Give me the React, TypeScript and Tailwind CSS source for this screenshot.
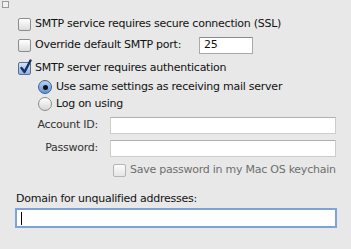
import React from 'react';

const Check: React.FC<{ checked?: boolean; disabled?: boolean }> = ({ checked, disabled }) => (
  <span
    className={`relative inline-block w-[13px] h-[13px] shrink-0 rounded-[2px] border ${
      disabled
        ? 'border-[#b4b4b4] bg-gradient-to-b from-[#fbfbfb] to-[#e6e6e6]'
        : checked
        ? 'border-[#5a6f94] bg-gradient-to-b from-[#d3e3f6] to-[#8fb3e0]'
        : 'border-[#8c8c8c] bg-gradient-to-b from-white to-[#dcdcdc]'
    }`}
  >
    {checked && (
      <svg className="absolute left-[0px] top-[-4px]" width="13" height="16" viewBox="0 0 13 16">
        <path d="M2.5 9 L5.5 13 L11.5 1.5" fill="none" stroke="#16306a" strokeWidth="2.4" strokeLinecap="round" strokeLinejoin="round" />
      </svg>
    )}
  </span>
);

const Radio: React.FC<{ on?: boolean }> = ({ on }) => (
  <span
    className={`flex items-center justify-center w-[14px] h-[14px] shrink-0 rounded-full border ${
      on
        ? 'border-[#3f5f8f] bg-gradient-to-b from-[#b9d3f1] to-[#5f93d6]'
        : 'border-[#8c8c8c] bg-gradient-to-b from-white to-[#d6d6d6]'
    }`}
  >
    {on && <span className="w-[5px] h-[5px] rounded-full bg-[#111]" />}
  </span>
);

export default function App() {
  return (
    <div
      className="w-[351px] h-[249px] bg-[#e8e8e8] overflow-hidden text-[11px] tracking-[-0.25px] text-[#111] flex flex-col"
      style={{ fontFamily: '"DejaVu Sans", "Liberation Sans", sans-serif' }}
    >
      <div className="h-[14px] pl-[2px] pt-[1px]">
        <span className="block w-[7px] h-[7px] border border-[#9a9a9a] bg-[#f0f0f0]" />
      </div>

      <div className="h-[20px] flex items-center pl-[18px] gap-[4px]">
        <Check />
        <span>SMTP service requires secure connection (SSL)</span>
      </div>

      <div className="h-[22px] flex items-center pl-[18px] gap-[4px]">
        <Check />
        <span className="w-[160px]">Override default SMTP port:</span>
        <div className="w-[54px] h-[17px] bg-white border border-[#a9a9a9] border-t-[#8a8a8a] flex items-center pl-[4px]">
          25
        </div>
      </div>

      <div className="h-[24px] flex items-center pl-[18px] gap-[4px]">
        <Check checked />
        <span>SMTP server requires authentication</span>
      </div>

      <div className="h-[14px] flex items-center pl-[38px] gap-[4px]">
        <Radio on />
        <span>Use same settings as receiving mail server</span>
      </div>

      <div className="h-[20px] flex items-center pl-[38px] gap-[4px]">
        <Radio />
        <span>Log on using</span>
      </div>

      <div className="mt-[3px] h-[17px] flex items-center">
        <span className="w-[98px] text-right text-[#333]">Account ID:</span>
        <div className="ml-[12px] w-[226px] h-[17px] bg-white border border-[#cdcdcd] border-t-[#b0b0b0]" />
      </div>

      <div className="mt-[6px] h-[17px] flex items-center">
        <span className="w-[98px] text-right text-[#333]">Password:</span>
        <div className="ml-[12px] w-[226px] h-[17px] bg-white border border-[#cdcdcd] border-t-[#b0b0b0]" />
      </div>

      <div className="mt-[6px] h-[14px] flex items-center pl-[113px] gap-[4px]">
        <Check disabled />
        <span className="text-[#6e6e6e]">Save password in my Mac OS keychain</span>
      </div>

      <div className="mt-[15px] h-[14px] flex items-center pl-[16px]">
        <span>Domain for unqualified addresses:</span>
      </div>

      <div className="mt-[2px] ml-[15px] w-[322px] h-[20px] border-2 border-[#7fa3d6] bg-white flex items-center pl-[4px]">
        <span className="w-[1px] h-[13px] bg-black" />
      </div>
    </div>
  );
}
